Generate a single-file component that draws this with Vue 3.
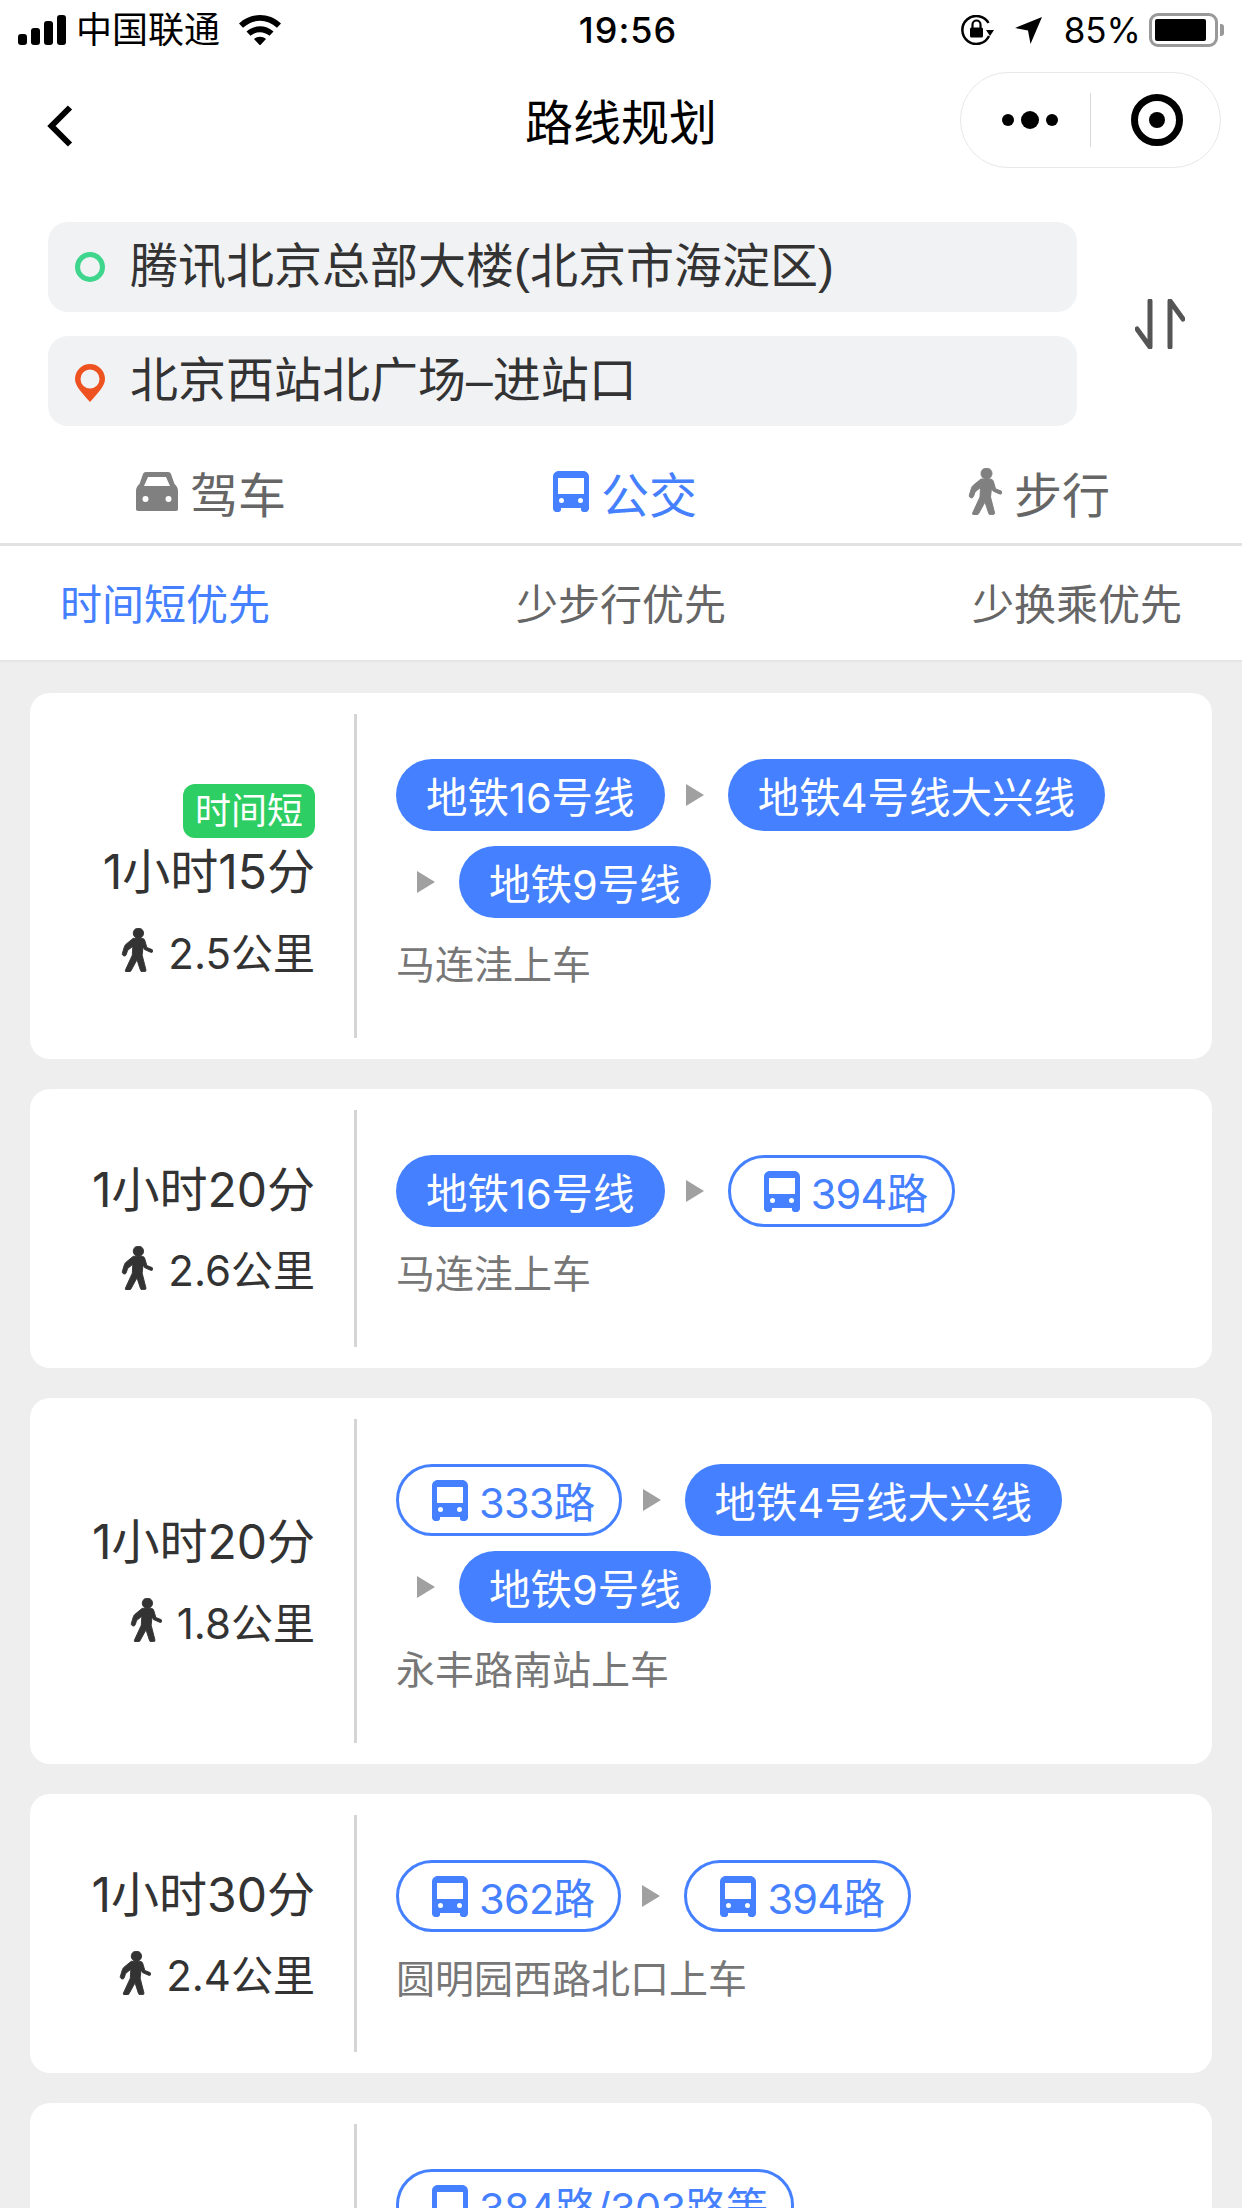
<template>
  <div class="page">
    <div class="status-bar">
      <div class="status-left">
        <svg class="signal" width="48" height="30" viewBox="0 0 48 30">
          <rect x="0" y="19" width="9" height="11" rx="3" />
          <rect x="13" y="13" width="9" height="17" rx="3" />
          <rect x="26" y="6" width="9" height="24" rx="3" />
          <rect x="39" y="0" width="9" height="30" rx="3" />
        </svg>
        <span class="carrier">中国联通</span>
        <svg class="wifi" width="42" height="30" viewBox="0 0 42 30">
          <path d="M0 8.5C12-2.8 30-2.8 42 8.5l-4 4.3C27.8 3.5 14.2 3.5 4 12.8z" />
          <path d="M7.5 16.5c8-7 19-7 27 0l-4 4.3c-5.8-4.8-13.2-4.8-19 0z" />
          <path d="M15 24c3.6-3 8.4-3 12 0l-6 6.5z" />
        </svg>
      </div>
      <span class="clock">19:56</span>
      <div class="status-right">
        <svg class="rotate-lock" width="33" height="30" viewBox="0 0 33 30">
          <path d="M28 21A14 14 0 1 1 27.5 8" fill="none" stroke="#000" stroke-width="2.5" />
          <path d="M25 15h8l-4 6z" />
          <rect x="9" y="12.5" width="13" height="10" rx="1.5" />
          <path d="M11.5 13V9.5a4 4 0 0 1 8 0V13" fill="none" stroke="#000" stroke-width="2.2" />
        </svg>
        <svg class="location" width="27" height="27" viewBox="0 0 27 27">
          <path d="M27 0L15.5 27l-2.5-13.5L0 11z" />
        </svg>
        <span class="percent">85%</span>
        <div class="battery"><div class="battery-fill"></div></div>
        <div class="battery-nub"></div>
      </div>
    </div>

    <div class="nav-bar">
      <svg class="back" width="26" height="42" viewBox="0 0 26 42">
        <path d="M23 2.5L4.5 21 23 39.5" fill="none" stroke="#000" stroke-width="6" />
      </svg>
      <span class="nav-title">路线规划</span>
      <div class="capsule">
        <div class="capsule-dots">
          <i class="dot"></i><i class="dot big"></i><i class="dot"></i>
        </div>
        <div class="capsule-line"></div>
        <div class="capsule-target"><i></i></div>
      </div>
    </div>

    <div class="search">
      <div class="inputs">
        <div class="input">
          <div class="start-dot"></div>
          <span>腾讯北京总部大楼(北京市海淀区)</span>
        </div>
        <div class="input">
          <svg class="pin" width="30" height="38" viewBox="0 0 30 38">
            <path fill-rule="evenodd" d="M15 0a15 15 0 0 1 15 15c0 7-7 14-15 23C7 29 0 22 0 15A15 15 0 0 1 15 0zm0 5.5a9.500 9.500 0 1 0 0 19 9.500 9.500 0 0 0 0-19z" />
          </svg>
          <span>北京西站北广场–进站口</span>
        </div>
      </div>
      <svg class="swap" width="50" height="50" viewBox="0 0 50 50">
        <path d="M15 2v46L2 30M35 48V2l13 18" fill="none" stroke="#555" stroke-width="5" stroke-linecap="round" stroke-linejoin="round" />
      </svg>
    </div>

    <div class="modes">
      <div class="mode">
        <svg width="42" height="39" viewBox="0 0 42 39">
          <path fill-rule="evenodd" d="M10 0H32C33.5 0 34.5 .8 35 2L38.5 12C40.8 14 42 16 42 19V37C42 38.2 41.2 39 40 39H2C.8 39 0 38.2 0 37V19C0 16 1.2 14 3.5 12L7 2C7.5 .8 8.5 0 10 0ZM12 5L8 14H34L30 5ZM9.5 24a3 3 0 1 0 0 6 3 3 0 0 0 0-6ZM32.5 24a3 3 0 1 0 0 6 3 3 0 0 0 0-6Z" />
        </svg>
        <span>驾车</span>
      </div>
      <div class="mode active">
        <svg class="bus" width="36" height="41" viewBox="0 0 36 41"><path fill-rule="evenodd" :d="busPath" /></svg>
        <span>公交</span>
      </div>
      <div class="mode">
        <svg class="walker" width="34" height="47" viewBox="0 0 34 47"><path :d="walkBody" /><circle cx="18.5" cy="5.5" r="5.5" /></svg>
        <span>步行</span>
      </div>
    </div>

    <div class="sorts">
      <span class="sort active">时间短优先</span>
      <span class="sort">少步行优先</span>
      <span class="sort">少换乘优先</span>
    </div>

    <div class="list">
      <div v-for="(plan, i) in plans" :key="i" class="card">
        <div class="card-left">
          <span v-if="plan.tag" class="tag">{{ plan.tag }}</span>
          <div v-if="plan.time" class="time">{{ plan.time }}</div>
          <div v-if="plan.walk" class="walk">
            <svg class="walker" width="32" height="44" viewBox="0 0 34 47"><path :d="walkBody" /><circle cx="18.5" cy="5.5" r="5.5" /></svg>
            <span>{{ plan.walk }}</span>
          </div>
        </div>
        <div class="card-right">
          <div class="lines">
            <div v-for="(line, j) in plan.lines" :key="j" class="segment">
              <i v-if="j > 0" class="arrow"></i>
              <div class="pill" :class="line.bus ? 'pill-bus' : 'pill-subway'">
                <svg v-if="line.bus" class="bus" width="36" height="41" viewBox="0 0 36 41"><path fill-rule="evenodd" :d="busPath" /></svg>
                <span>{{ line.name }}</span>
              </div>
            </div>
          </div>
          <div v-if="plan.stop" class="stop">{{ plan.stop }}</div>
        </div>
      </div>
    </div>
  </div>
</template>

<script setup>
const busPath = 'M6 0h24c3.5 0 6 2.5 6 6v31.5c0 1.5-1 2.5-2.5 3.5h-3c-1.5 0-2.5-1-2.5-2.5V37H8v1.5C8 40 7 41 5.5 41h-3C1 40 0 39 0 37.5V6c0-3.5 2.5-6 6-6zM5 7v16h26V7zm3.5 20a2.5 2.5 0 1 0 0 5 2.5 2.5 0 0 0 0-5zm19 0a2.5 2.5 0 1 0 0 5 2.5 2.5 0 0 0 0-5z'

const walkBody = 'M13 11H22C24 11 25 12 25.5 14L27.5 20.8L33 23C34 23.5 34.3 24.5 33.8 25.3C33.3 26.1 32.5 26.3 31.5 25.9L25 23L23.5 20L22.5 29L26.5 44.5C26.8 45.8 26 46.8 24.8 46.8H22.5C21.5 46.8 21 46.3 20.7 45.3L17 34L10.5 45.8C10 46.6 9.4 47 8.5 47H6C4.8 47 4.2 46 4.7 44.8L12 29L12.5 19.5L7 24L5.5 28.5C5 29.7 4.2 30.1 3 29.8C1.5 29.3 1 28.3 1.4 27L3.5 20C3.9 18.8 4.5 18 5.3 17.3Z'

const subway = (name) => ({ name })
const bus = (name) => ({ name, bus: true })

const plans = [
  {
    tag: '时间短',
    time: '1小时15分',
    walk: '2.5公里',
    lines: [subway('地铁16号线'), subway('地铁4号线大兴线'), subway('地铁9号线')],
    stop: '马连洼上车'
  },
  {
    time: '1小时20分',
    walk: '2.6公里',
    lines: [subway('地铁16号线'), bus('394路')],
    stop: '马连洼上车'
  },
  {
    time: '1小时20分',
    walk: '1.8公里',
    lines: [bus('333路'), subway('地铁4号线大兴线'), subway('地铁9号线')],
    stop: '永丰路南站上车'
  },
  {
    time: '1小时30分',
    walk: '2.4公里',
    lines: [bus('362路'), bus('394路')],
    stop: '圆明园西路北口上车'
  },
  {
    lines: [bus('384路/303路等')]
  }
]
</script>

<style>
html, body {
  margin: 0;
  background: #eeeeee;
}
</style>

<style scoped>
.page {
  width: 1242px;
  height: 2208px;
  overflow: hidden;
  background: #eeeeee;
  font-family: Inter, "Noto Sans CJK SC", sans-serif;
  color: #333;
}

.status-bar {
  height: 60px;
  padding: 0 18px;
  box-sizing: border-box;
  background: #fff;
  color: #000;
  display: flex;
  align-items: center;
  justify-content: space-between;
  position: relative;
}

.status-left,
.status-right {
  display: flex;
  align-items: center;
}

.status-right svg,
.status-left svg {
  display: block;
}

.carrier {
  font-size: 36px;
  line-height: 64px;
  margin-left: 10px;
}

.wifi {
  margin-left: 19px;
}

.clock {
  position: absolute;
  left: 14px;
  right: 0;
  text-align: center;
  font-size: 36px;
  font-weight: 500;
  line-height: 62px;
  letter-spacing: 1px;
}

.location {
  margin-left: 21px;
}

.percent {
  font-size: 35px;
  margin-left: 22px;
  line-height: 64px;
}

.battery {
  width: 69px;
  height: 34px;
  margin-left: 8px;
  padding: 3px;
  box-sizing: border-box;
  border: 3px solid #999;
  border-radius: 9px;
}

.battery-fill {
  width: 51px;
  height: 22px;
  background: #000;
  border-radius: 2px;
}

.battery-nub {
  width: 4px;
  height: 12px;
  margin-left: 2px;
  background: #999;
  border-radius: 0 3px 3px 0;
}

.nav-bar {
  height: 140px;
  background: #fff;
  position: relative;
  display: flex;
  align-items: center;
  justify-content: center;
}

.nav-title {
  font-size: 48px;
  line-height: 60px;
  color: #000;
  margin-bottom: 14px;
}

.back {
  position: absolute;
  left: 47px;
  top: 45px;
}

.capsule {
  position: absolute;
  top: 12px;
  right: 21px;
  width: 261px;
  height: 96px;
  box-sizing: border-box;
  border: 1px solid #e8e8e8;
  border-radius: 48px;
  display: flex;
  align-items: center;
}

.capsule-dots {
  width: 129px;
  display: flex;
  align-items: center;
  justify-content: center;
  gap: 7px;
  padding-left: 8px;
  box-sizing: border-box;
}

.dot {
  display: block;
  width: 12px;
  height: 12px;
  border-radius: 50%;
  background: #000;
}

.dot.big {
  width: 18px;
  height: 18px;
}

.capsule-line {
  width: 1px;
  height: 54px;
  background: #d8d8d8;
}

.capsule-target {
  width: 52px;
  height: 52px;
  margin-left: 40px;
  box-sizing: border-box;
  border: 7px solid #000;
  border-radius: 50%;
  display: flex;
  align-items: center;
  justify-content: center;
}

.capsule-target i {
  display: block;
  width: 16px;
  height: 16px;
  border-radius: 50%;
  background: #000;
}

.search {
  background: #fff;
  padding: 22px 57px 0 48px;
  display: flex;
  align-items: center;
  justify-content: space-between;
}

.inputs {
  width: 1029px;
  display: flex;
  flex-direction: column;
  gap: 24px;
}

.input {
  height: 90px;
  background: #f1f2f4;
  border-radius: 20px;
  display: flex;
  align-items: center;
  padding-left: 27px;
  font-family: "Liberation Sans", "Noto Sans CJK SC", sans-serif;
  font-size: 48px;
  color: #333;
}

.input span {
  margin-left: 25px;
  margin-bottom: 10px;
  white-space: nowrap;
}

.start-dot {
  width: 30px;
  height: 30px;
  box-sizing: border-box;
  border: 5px solid #3dd68c;
  border-radius: 50%;
}

.pin {
  display: block;
  fill: #ee5220;
  margin-top: 4px;
}

.modes {
  height: 117px;
  padding-top: 14px;
  box-sizing: border-box;
  background: #fff;
  display: grid;
  grid-template-columns: 1fr 1fr 1fr;
  align-items: center;
}

.mode {
  display: flex;
  align-items: center;
  justify-content: center;
  gap: 12px;
  padding-left: 8px;
  font-size: 48px;
  color: #666;
}

.mode svg {
  display: block;
  fill: #808080;
}

.mode .walker {
  stroke: #808080;
}

.mode.active {
  color: #4480ff;
}

.mode.active svg {
  fill: #4480ff;
}

.sorts {
  border-top: 3px solid #e2e2e2;
  border-bottom: 2px solid #e6e6e6;
  height: 110px;
  padding: 0 60px 4px;
  background: #fff;
  display: flex;
  align-items: center;
  justify-content: space-between;
}

.sort {
  font-size: 42px;
  color: #666;
}

.sort.active {
  color: #4480ff;
}

.list {
  padding: 31px 30px 0;
  display: flex;
  flex-direction: column;
  gap: 30px;
}

.card {
  background: #fff;
  border-radius: 20px;
  padding: 21px 0;
  display: flex;
}

.card-left {
  width: 327px;
  flex-shrink: 0;
  padding-right: 39px;
  box-sizing: border-box;
  border-right: 3px solid #d5d5d5;
  display: flex;
  flex-direction: column;
  align-items: flex-end;
  justify-content: center;
}

.tag {
  width: 132px;
  height: 54px;
  margin-top: 12px;
  margin-bottom: 4px;
  background: #2dce63;
  color: #fff;
  border-radius: 12px;
  font-size: 36px;
  line-height: 54px;
  text-align: center;
}

.time {
  font-size: 48px;
  line-height: 60px;
  white-space: nowrap;
}

.walk {
  margin-top: 18px;
  height: 60px;
  display: flex;
  align-items: center;
  gap: 15px;
  font-size: 42px;
  white-space: nowrap;
}

.walk svg {
  display: block;
  fill: #333;
  stroke: #333;
}

.card-right {
  flex: 1;
  padding: 45px 0 43px 39px;
  min-width: 0;
}

.lines {
  display: flex;
  flex-wrap: wrap;
  row-gap: 15px;
}

.segment {
  display: flex;
  align-items: center;
}

.arrow {
  display: block;
  width: 0;
  height: 0;
  margin: 0 24px 0 21px;
  border-left: 18px solid #a0a0a0;
  border-top: 11px solid transparent;
  border-bottom: 11px solid transparent;
}

.pill {
  height: 72px;
  border-radius: 36px;
  box-sizing: border-box;
  display: flex;
  align-items: center;
  font-size: 41.5px;
  white-space: nowrap;
}

.pill-subway {
  background: #4480ff;
  color: #fff;
  padding: 0 30px;
}

.pill-bus {
  border: 3px solid #4480ff;
  color: #4480ff;
  padding: 0 24px 0 33px;
  gap: 11px;
  letter-spacing: -0.7px;
}

.pill-bus svg {
  display: block;
  fill: #4480ff;
}

.stop {
  margin-top: 17px;
  font-size: 39px;
  line-height: 60px;
  color: #777;
}
</style>
